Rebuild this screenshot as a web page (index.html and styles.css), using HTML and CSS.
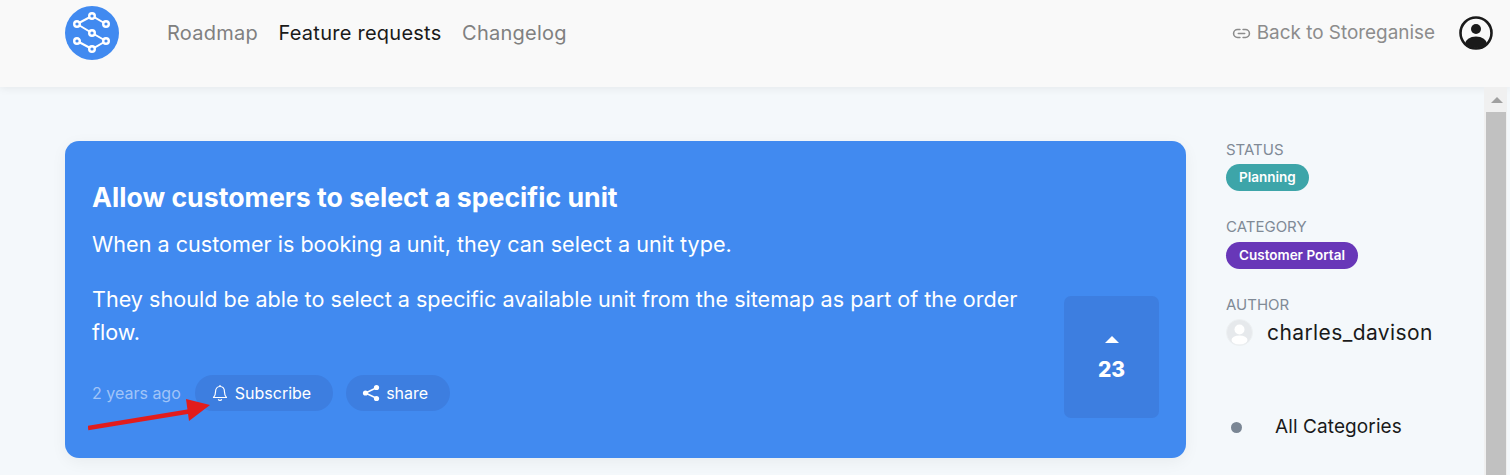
FILE: index.html
```html
<!DOCTYPE html>
<html lang="en">
<head>
    <meta charset="UTF-8">
    <title>Feature requests</title>
    <link rel="stylesheet" href="styles.css">
</head>
<body>
    <header class="topbar">
        <svg class="logo" width="54" height="54" viewBox="0 0 54 54">
            <circle cx="27" cy="27" r="27" fill="#418af0"/>
            <path d="M12 18 27 10 41 18M12 18 27 27 41 35M12 35 27 43 41 35" fill="none" stroke="#fff" stroke-width="2"/>
            <g fill="#418af0" stroke="#fff" stroke-width="2.4">
                <circle cx="12" cy="18" r="2.8"/>
                <circle cx="27" cy="10" r="2.8"/>
                <circle cx="41" cy="18" r="2.8"/>
                <circle cx="27" cy="27" r="2.8"/>
                <circle cx="41" cy="35" r="2.8"/>
                <circle cx="27" cy="43" r="2.8"/>
                <circle cx="12" cy="35" r="2.8"/>
            </g>
        </svg>
        <nav class="nav">
            <a>Roadmap</a>
            <a class="active">Feature requests</a>
            <a>Changelog</a>
        </nav>
        <a class="back-link">
            <svg width="19" height="19" viewBox="0 0 24 24" fill="none" stroke="#8c8c8c" stroke-width="2" stroke-linecap="round">
                <path d="M10 7H7a5 5 0 0 0 0 10h3M14 7h3a5 5 0 0 1 0 10h-3M8 12h8"/>
            </svg>
            Back to Storeganise
        </a>
        <svg class="user-icon" width="34" height="34" viewBox="0 0 34 34">
            <defs>
                <clipPath id="userClip"><circle cx="17" cy="17" r="15"/></clipPath>
            </defs>
            <circle cx="17" cy="17" r="15.5" fill="none" stroke="#1a1a1a" stroke-width="2.6"/>
            <circle cx="17" cy="13" r="5" fill="#1a1a1a"/>
            <ellipse cx="17" cy="28" rx="11" ry="7.5" fill="#1a1a1a" clip-path="url(#userClip)"/>
        </svg>
    </header>

    <div class="page">
        <main class="card">
            <div class="card-body">
                <h1>Allow customers to select a specific unit</h1>
                <p>When a customer is booking a unit, they can select a unit type.</p>
                <p>They should be able to select a specific available unit from the sitemap as part of the order flow.</p>
                <div class="card-meta">
                    <span class="age">2 years ago</span>
                    <button class="pill-btn subscribe">
                        <svg width="16" height="18" viewBox="0 0 16 18" fill="none" stroke="#fff" stroke-width="1.2" stroke-linejoin="round">
                            <path d="M1.500 13.500h13c-1.400-1.300-2-2.400-2-5.500 0-3.200-1.600-5.500-4.500-5.500S3.500 4.800 3.500 8c0 3.100-.6 4.200-2 5.500Z"/>
                            <path d="M8 1v1.500M6.300 15.300a1.800 1.800 0 0 0 3.400 0"/>
                        </svg>
                        Subscribe
                    </button>
                    <button class="pill-btn share">
                        <svg width="18" height="18" viewBox="0 0 18 18" fill="#fff">
                            <path d="M15 3.500 3.500 9 15 14.500" fill="none" stroke="#fff" stroke-width="1.500"/>
                            <circle cx="14.500" cy="3.500" r="2.600"/>
                            <circle cx="3.500" cy="9" r="2.600"/>
                            <circle cx="14.500" cy="14.500" r="2.600"/>
                        </svg>
                        share
                    </button>
                </div>
            </div>
            <button class="vote">
                <span class="vote-arrow"></span>
                <span>23</span>
            </button>
        </main>

        <aside class="sidebar">
            <div class="side-group">
                <div class="side-label">STATUS</div>
                <span class="badge teal">Planning</span>
            </div>
            <div class="side-group">
                <div class="side-label">CATEGORY</div>
                <span class="badge purple">Customer Portal</span>
            </div>
            <div class="side-group">
                <div class="side-label">AUTHOR</div>
                <div class="author">
                    <svg width="27" height="27" viewBox="0 0 27 27">
                        <defs>
                            <clipPath id="avatarClip"><circle cx="13.500" cy="13.500" r="13"/></clipPath>
                        </defs>
                        <circle cx="13.500" cy="13.500" r="13" fill="#e6e9ec" stroke="#edf0f2"/>
                        <circle cx="13.500" cy="10.500" r="5" fill="#fff"/>
                        <ellipse cx="13.500" cy="21" rx="8" ry="4.500" fill="#fff" clip-path="url(#avatarClip)"/>
                    </svg>
                    charles_davison
                </div>
            </div>
            <div class="category-row">
                <span class="dot"></span>
                All Categories
            </div>
        </aside>
    </div>

    <div class="scrollbar">
        <span class="scroll-up"></span>
        <div class="scroll-thumb"></div>
    </div>

    <!-- annotation from the screenshot -->
    <svg class="red-arrow" width="140" height="40" viewBox="0 0 140 40">
        <path d="M0 30 104 13" stroke="#e21c1c" stroke-width="4.500"/>
        <path d="M98 1 122 7 101 23Z" fill="#e21c1c"/>
    </svg>
</body>
</html>
```

FILE: styles.css
```css
html, body {
    height: 100%;
    overflow: hidden;
}

body {
    margin: 0;
    font-family: 'Inter', sans-serif;
    background-color: #f4f8fb;
    color: #1a1a1a;
    position: relative;
}

.topbar {
    display: flex;
    align-items: flex-start;
    height: 87px;
    box-sizing: border-box;
    padding: 6px 17px 0 65px;
    background-color: #f9f9f9;
    box-shadow: 0 2px 8px rgba(0, 0, 0, 0.06);
    position: relative;
}

.nav {
    display: flex;
    gap: 20.5px;
    margin-left: 48px;
    padding-top: 15px;
    font-size: 20px;
    line-height: 24px;
    letter-spacing: 0.25px;
    color: #808080;
}

.nav .active {
    color: #1a1a1a;
}

.back-link {
    display: flex;
    align-items: center;
    gap: 6px;
    margin-left: auto;
    margin-top: 15px;
    font-size: 18.9px;
    line-height: 24px;
    color: #8c8c8c;
}

.user-icon {
    margin: 10px 0 0 24px;
}

.page {
    display: flex;
    padding: 54px 0 0 65px;
}

.card {
    display: flex;
    align-items: flex-end;
    width: 1121px;
    height: 317px;
    box-sizing: border-box;
    padding: 39px 27px 40px 27px;
    background-color: #418af0;
    border-radius: 14px;
    box-shadow: 0 4px 16px rgba(0, 0, 0, 0.05);
    color: #fff;
    flex-shrink: 0;
}

.card-body {
    flex: 1;
    align-self: flex-start;
    padding-right: 40px;
}

.card h1 {
    margin: 0 0 14px;
    font-size: 26.7px;
    line-height: 34px;
    font-weight: 700;
}

.card p {
    margin: 0 0 23px;
    font-size: 21.6px;
    line-height: 32px;
}

.card p + p {
    line-height: 32.5px;
}

.card-meta {
    display: flex;
    align-items: center;
    margin-top: 27px;
}

.age {
    font-size: 16px;
    color: #a0c4f8;
    margin-right: 14px;
}

.pill-btn {
    display: flex;
    align-items: center;
    gap: 7px;
    height: 36px;
    padding: 0 22px 0 17px;
    margin-right: 13px;
    border: none;
    border-radius: 18px;
    background-color: #3d7ee0;
    color: #fff;
    font-family: inherit;
    font-size: 16px;
}

.share {
    gap: 6px;
    padding-left: 16px;
}

.vote {
    display: flex;
    flex-direction: column;
    align-items: center;
    justify-content: center;
    width: 95px;
    height: 122px;
    flex-shrink: 0;
    padding: 3px 0 0;
    border: none;
    border-radius: 7px;
    background-color: #3d7ee0;
    color: #fff;
    font-family: inherit;
    font-size: 21px;
    font-weight: 800;
}

.vote-arrow {
    width: 0;
    height: 0;
    margin-bottom: 14px;
    border-left: 7px solid transparent;
    border-right: 7px solid transparent;
    border-bottom: 7px solid #fff;
}

.sidebar {
    margin-left: 40px;
    width: 240px;
    padding-top: 0;
}

.side-group {
    margin-bottom: 27px;
}

.side-label {
    font-size: 15px;
    line-height: 18px;
    color: #808a96;
}

.badge {
    display: inline-block;
    margin-top: 5px;
    padding: 0 13px;
    height: 27px;
    line-height: 27px;
    border-radius: 14px;
    font-size: 13.5px;
    font-weight: 600;
    color: #fff;
}

.teal {
    background-color: #3da5a9;
}

.purple {
    margin-top: 6px;
    background-color: #6837b8;
}

.author {
    display: flex;
    align-items: center;
    gap: 14px;
    margin-top: 5px;
    font-size: 21px;
    line-height: 27px;
    letter-spacing: 0.4px;
}

.category-row {
    display: flex;
    align-items: center;
    margin-top: 69px;
    padding-left: 5px;
    font-size: 19px;
    line-height: 24px;
    letter-spacing: 0.1px;
}

.dot {
    width: 11px;
    height: 11px;
    margin-right: 33px;
    border-radius: 50%;
    background-color: #7a8694;
}

.scrollbar {
    position: absolute;
    top: 87px;
    right: 3px;
    bottom: 0;
    width: 23px;
    background-color: #f0f0f0;
}

.scroll-up {
    position: absolute;
    top: 10px;
    left: 7px;
    width: 0;
    height: 0;
    border-left: 6px solid transparent;
    border-right: 6px solid transparent;
    border-bottom: 6px solid #a0a0a0;
}

.scroll-thumb {
    position: absolute;
    top: 25px;
    left: 2px;
    width: 20px;
    bottom: 0;
    background-color: #c1c1c1;
}

.red-arrow {
    position: absolute;
    left: 88px;
    top: 398px;
}
```
